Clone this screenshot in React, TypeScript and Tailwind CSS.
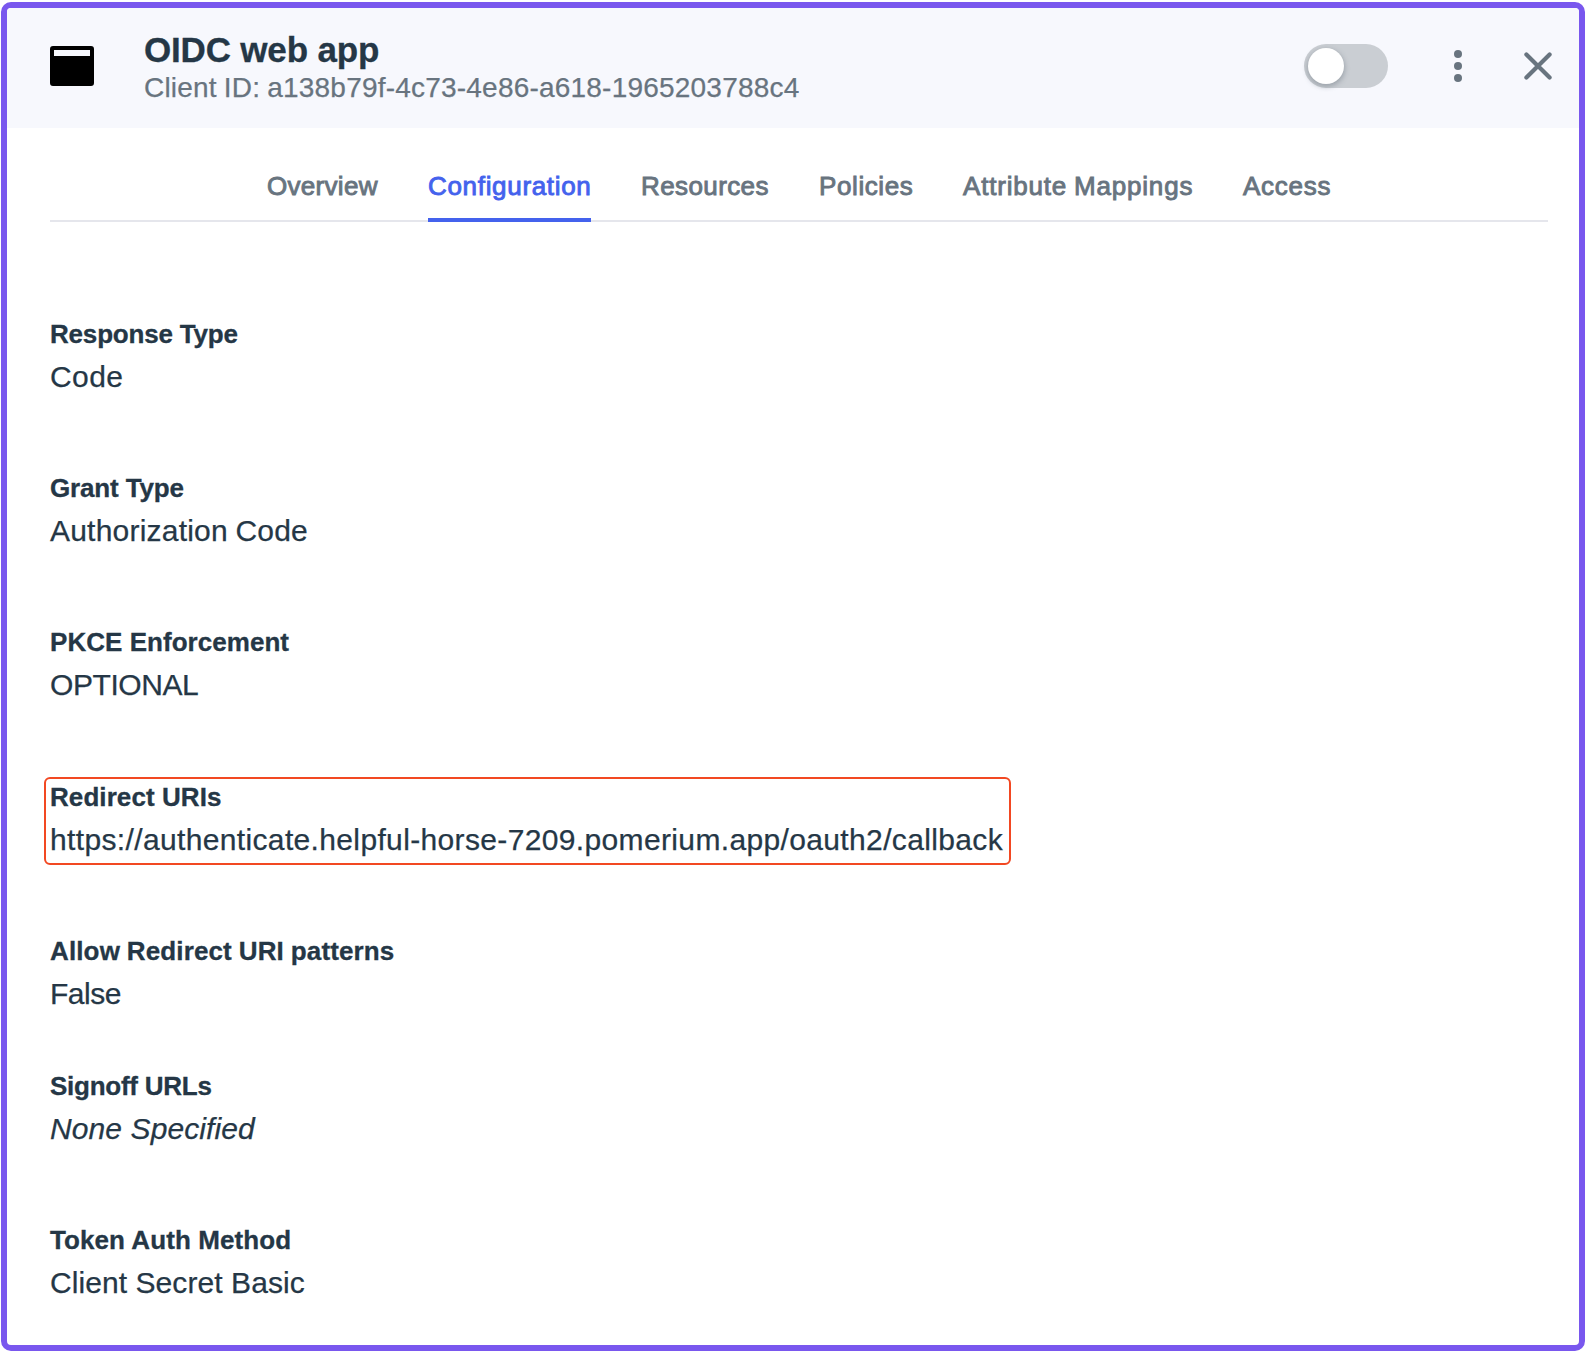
import type { ReactNode } from "react";

const tabs = [
  { label: "Overview", size: "w-[111px] tracking-[0.3px]" },
  { label: "Configuration", size: "w-[163px] tracking-[0.68px]", active: true },
  { label: "Resources", size: "w-[128px] tracking-[0.4px]" },
  { label: "Policies", size: "w-[94px] tracking-[0.6px]" },
  { label: "Attribute Mappings", size: "w-[230px] tracking-[0.8px] [word-spacing:-1px]" },
  { label: "Access", size: "w-[88px] tracking-[0.75px]" },
];

function Tabs() {
  return (
    <nav className="mr-[31px] ml-[43px] mt-[26px] flex h-[68px] gap-[50px] border-b-2 border-[#e5e6ec] pl-[217px]">
      {tabs.map((t) => (
        <a
          key={t.label}
          className={`-mb-0.5 h-[68px] shrink-0 whitespace-nowrap pt-3 text-[26px] leading-[40px] [-webkit-text-stroke:0.9px_currentColor] ${t.size} ${
            t.active ? "border-b-4 border-[#4462ED] text-[#4462ED]" : "text-[#68747f]"
          }`}
        >
          {t.label}
        </a>
      ))}
    </nav>
  );
}

type FieldProps = {
  label: string;
  labelClass: string;
  valueClass: string;
  className?: string;
  highlighted?: boolean;
  children: ReactNode;
};

function Field({ label, labelClass, valueClass, className = "mb-[69px]", highlighted, children }: FieldProps) {
  return (
    <div className={`relative whitespace-nowrap ${className}`}>
      <dt className={`text-[26px] leading-[40px] font-bold [-webkit-text-stroke:0.3px_currentColor] ${labelClass}`}>
        {label}
      </dt>
      <dd className={`text-[30px] leading-[45px] [-webkit-text-stroke:0.25px_currentColor] ${valueClass}`}>
        {children}
      </dd>
      {highlighted && (
        <div className="absolute top-0 -left-[6px] h-[88px] w-[967px] rounded-md border-2 border-[#f24822]" />
      )}
    </div>
  );
}

export default function App() {
  return (
    <div className="h-[1352px] w-[1586px] bg-white pt-0.5 pl-px font-['Liberation_Sans',Arial,sans-serif] text-[#253746]">
      <main className="h-[1349px] w-[1584px] overflow-hidden rounded-[10px] border-[6px] border-[#7957ee] bg-white">
        <header className="flex h-[120px] bg-[#f7f8fd] pl-[43px]">
          <svg className="mt-[38px] h-10 w-11 shrink-0" viewBox="0 0 44 40" fill="#000">
            <path
              fillRule="evenodd"
              d="M3 0H41A3 3 0 0 1 44 3V37A3 3 0 0 1 41 40H3A3 3 0 0 1 0 37V3A3 3 0 0 1 3 0ZM4 4V10H40V4Z"
            />
          </svg>
          <div className="ml-[50px] flex-1 whitespace-nowrap pt-[22px]">
            <h1 className="text-[35px] leading-[40px] font-bold tracking-[-0.18px] [-webkit-text-stroke:0.3px_currentColor]">
              OIDC web app
            </h1>
            <p className="text-[28px] leading-[36px] tracking-[0.21px] text-[#68747f] [-webkit-text-stroke:0.25px_currentColor] [word-spacing:-1px]">
              Client ID: a138b79f-4c73-4e86-a618-1965203788c4
            </p>
          </div>
          <button
            role="switch"
            aria-checked="false"
            aria-label="Enabled"
            className="mt-9 h-11 w-[84px] shrink-0 rounded-full bg-[#caced3] p-1"
          >
            <span className="block size-9 rounded-full bg-white shadow-[0_2px_5px_1px_rgba(104,116,127,0.45)]" />
          </button>
          <button aria-label="More" className="mt-[38px] ml-[50px] size-10 shrink-0">
            <svg className="size-10" viewBox="0 0 40 40" fill="#68747f">
              <circle cx="20" cy="8" r="4" />
              <circle cx="20" cy="20" r="4" />
              <circle cx="20" cy="32" r="4" />
            </svg>
          </button>
          <button aria-label="Close" className="mr-[21px] ml-10 mt-[38px] size-10 shrink-0">
            <svg className="size-10" viewBox="0 0 40 40" fill="none" stroke="#68747f" strokeWidth="4.2" strokeLinecap="round">
              <path d="M8.4 8.4 31.6 31.6M31.6 8.4 8.4 31.6" />
            </svg>
          </button>
        </header>

        <Tabs />

        <dl className="pt-[92px] pl-[43px]">
          <Field label="Response Type" labelClass="tracking-[-0.19px]" valueClass="tracking-[0.42px]">
            Code
          </Field>
          <Field
            label="Grant Type"
            labelClass="tracking-[-0.151px]"
            valueClass="tracking-[0.21px] [word-spacing:-1px]"
          >
            Authorization Code
          </Field>
          <Field
            label="PKCE Enforcement"
            labelClass="tracking-[0.04px]"
            valueClass="tracking-[-0.431px]"
            className="mb-[70px]"
          >
            OPTIONAL
          </Field>
          <Field label="Redirect URIs" labelClass="tracking-[0.08px]" valueClass="tracking-[0.355px]" highlighted>
            https://authenticate.helpful-horse-7209.pomerium.app/oauth2/callback
          </Field>
          <Field
            label="Allow Redirect URI patterns"
            labelClass="tracking-[0.13px] [word-spacing:-0.5px]"
            valueClass="tracking-[-0.494px]"
            className="mb-[50px]"
          >
            False
          </Field>
          <Field label="Signoff URLs" labelClass="tracking-[-0.25px]" valueClass="tracking-[0.1px] italic">
            None Specified
          </Field>
          <Field
            label="Token Auth Method"
            labelClass="tracking-[0.08px]"
            valueClass="tracking-[0.07px]"
            className="mb-0"
          >
            Client Secret Basic
          </Field>
        </dl>
      </main>
    </div>
  );
}
